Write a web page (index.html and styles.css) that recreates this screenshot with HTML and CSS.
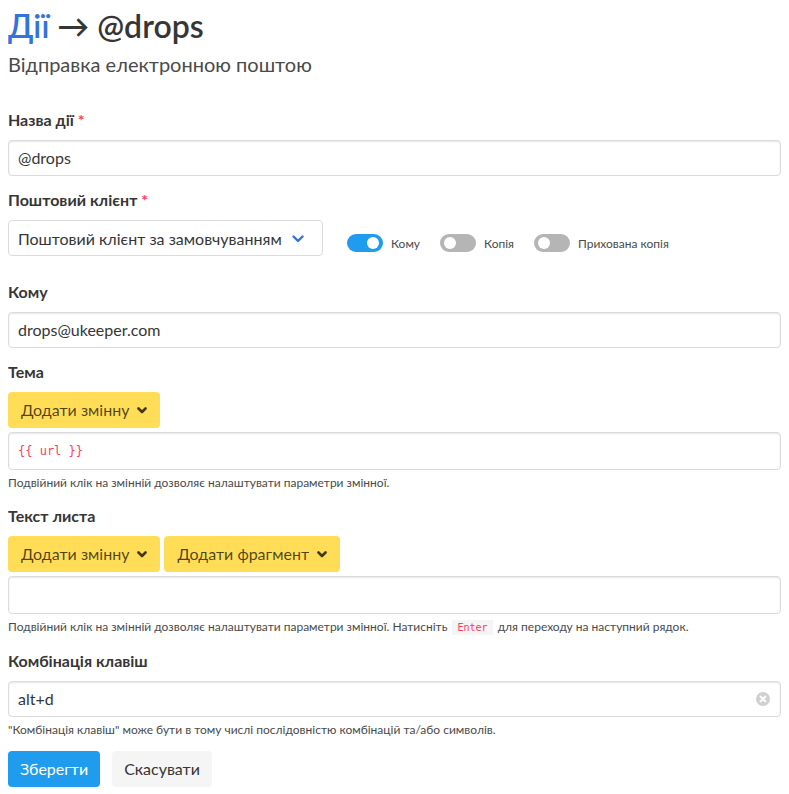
FILE: index.html
```html
<!DOCTYPE html>
<html lang="uk">
<head>
<meta charset="utf-8">
<title>Дії → @drops</title>
<link rel="stylesheet" href="styles.css">
</head>
<body>
<h1 class="title"><a class="title-link" href="#">Дії</a> → @drops</h1>
<h2 class="subtitle">Відправка електронною поштою</h2>

<div class="field">
  <label class="label">Назва дії <span class="req">*</span></label>
  <div class="input">@drops</div>
</div>

<div class="field">
  <label class="label">Поштовий клієнт <span class="req">*</span></label>
  <div class="client-row">
    <div class="select">
      <span>Поштовий клієнт за замовчуванням</span>
      <svg class="select-arrow" width="12" height="8" viewBox="0 0 12 8"><path d="M1.5 1.5 L6 6 L10.5 1.5" fill="none" stroke="#3273dc" stroke-width="2.4" stroke-linecap="round" stroke-linejoin="round"/></svg>
    </div>
    <div class="toggles">
      <span class="toggle on"><span class="knob"></span></span><span class="toggle-label">Кому</span>
      <span class="toggle"><span class="knob"></span></span><span class="toggle-label">Копія</span>
      <span class="toggle"><span class="knob"></span></span><span class="toggle-label">Прихована копія</span>
    </div>
  </div>
</div>

<div class="field">
  <label class="label">Кому</label>
  <div class="input">drops@ukeeper.com</div>
</div>

<div class="field">
  <label class="label">Тема</label>
  <div class="btn-row">
    <span class="btn btn-warning">Додати змінну <svg class="chev" width="10" height="7" viewBox="0 0 10 7"><path d="M1.5 1.5 L5 5 L8.5 1.5" fill="none" stroke="currentColor" stroke-width="2.6" stroke-linecap="round" stroke-linejoin="round"/></svg></span>
  </div>
  <div class="editor"><span class="var">{{ url }}</span></div>
  <p class="help">Подвійний клік на змінній дозволяє налаштувати параметри змінної.</p>
</div>

<div class="field">
  <label class="label">Текст листа</label>
  <div class="btn-row">
    <span class="btn btn-warning">Додати змінну <svg class="chev" width="10" height="7" viewBox="0 0 10 7"><path d="M1.5 1.5 L5 5 L8.5 1.5" fill="none" stroke="currentColor" stroke-width="2.6" stroke-linecap="round" stroke-linejoin="round"/></svg></span>
    <span class="btn btn-warning">Додати фрагмент <svg class="chev" width="10" height="7" viewBox="0 0 10 7"><path d="M1.5 1.5 L5 5 L8.5 1.5" fill="none" stroke="currentColor" stroke-width="2.6" stroke-linecap="round" stroke-linejoin="round"/></svg></span>
  </div>
  <div class="editor"></div>
  <p class="help">Подвійний клік на змінній дозволяє налаштувати параметри змінної. Натисніть <code class="kbd">Enter</code> для переходу на наступний рядок.</p>
</div>

<div class="field">
  <label class="label">Комбінація клавіш</label>
  <div class="input input-clear">
    <span>alt+d</span>
    <svg class="clear" width="14" height="14" viewBox="0 0 14 14"><circle cx="7" cy="7" r="7" fill="#d0d0d0"/><path d="M4.6 4.6 L9.4 9.4 M9.4 4.6 L4.6 9.4" stroke="#fff" stroke-width="2" stroke-linecap="round"/></svg>
  </div>
  <p class="help">"Комбінація клавіш" може бути в тому числі послідовністю комбінацій та/або символів.</p>
</div>

<div class="actions">
  <span class="btn btn-info">Зберегти</span>
  <span class="btn btn-light">Скасувати</span>
</div>
</body>
</html>
```
FILE: styles.css
```css
* { box-sizing: border-box; }
body {
  margin: 8px;
  font-family: "Lato", "Liberation Sans", sans-serif;
  font-size: 16px;
  color: #4a4a4a;
  background: #fff;
}
.title {
  margin: 0;
  font-size: 32px;
  font-weight: 600;
  line-height: 36px;
  color: #363636;
}
.title-link { color: #3273dc; text-decoration: none; }
.subtitle {
  margin: 8px 0 0;
  font-size: 20px;
  font-weight: 400;
  line-height: 25px;
  color: #4a4a4a;
}
.field { margin-bottom: 12px; }
.subtitle + .field { margin-top: 31px; }
.label {
  display: block;
  font-weight: 700;
  color: #363636;
  line-height: 24px;
  margin-bottom: 8px;
}
.req { color: #ff3860; }
.input, .select, .editor {
  border: 1px solid #dbdbdb;
  border-radius: 4px;
  box-shadow: inset 0 1px 2px rgba(10,10,10,.1);
  background: #fff;
  color: #363636;
}
.input {
  height: 36px;
  padding: 0 9px;
  display: flex;
  align-items: center;
  line-height: 24px;
}
.input-clear { justify-content: space-between; padding-right: 10px; }
.client-row {
  display: flex;
  align-items: center;
  margin-bottom: 24px;
}
.select {
  width: 315px;
  height: 36px;
  display: flex;
  align-items: center;
  justify-content: space-between;
  padding: 0 18px 0 9px;
  box-shadow: none;
  white-space: nowrap;
}
.select-arrow { margin-top: 1px; }
.toggles {
  display: flex;
  align-items: center;
  margin-left: 24px;
  margin-top: 10px;
  font-size: 12px;
  color: #4a4a4a;
}
.toggle {
  width: 36px;
  height: 18px;
  border-radius: 9px;
  background: #b5b5b5;
  position: relative;
  flex: none;
}
.toggle.on { background: #209cee; }
.knob {
  position: absolute;
  top: 3px;
  left: 4px;
  width: 12px;
  height: 12px;
  border-radius: 50%;
  background: #fff;
}
.toggle.on .knob { left: auto; right: 4px; }
.toggle-label { margin: 0 20px 0 8px; }
.btn-row { display: flex; gap: 4px; margin-bottom: 4px; }
.btn {
  display: inline-flex;
  align-items: center;
  height: 36px;
  border-radius: 4px;
  font-size: 16px;
  line-height: 24px;
  white-space: nowrap;
}
.btn-warning {
  background: #ffdd57;
  color: rgba(0,0,0,.7);
  padding: 0 13px;
}
.chev { margin-left: 8px; color: rgba(0,0,0,.75); }
.editor {
  height: 38px;
  padding: 0 9px;
  display: flex;
  align-items: center;
}
.var {
  font-family: "DejaVu Sans Mono", monospace;
  font-size: 12px;
  color: #ff3860;
}
.help {
  margin: 4px 0 0;
  font-size: 12px;
  line-height: 18px;
  color: #4a4a4a;
}
.kbd {
  font-family: "DejaVu Sans Mono", monospace;
  font-size: 10px;
  color: #ff3860;
  background: #f5f5f5;
  padding: 2px 5px;
  margin: 0 2px;
}
.actions { display: flex; gap: 12px; }
.btn-info { background: #209cee; color: #fff; padding: 0 12px; }
.btn-light { background: #f5f5f5; color: #363636; padding: 0 12px; }
```
